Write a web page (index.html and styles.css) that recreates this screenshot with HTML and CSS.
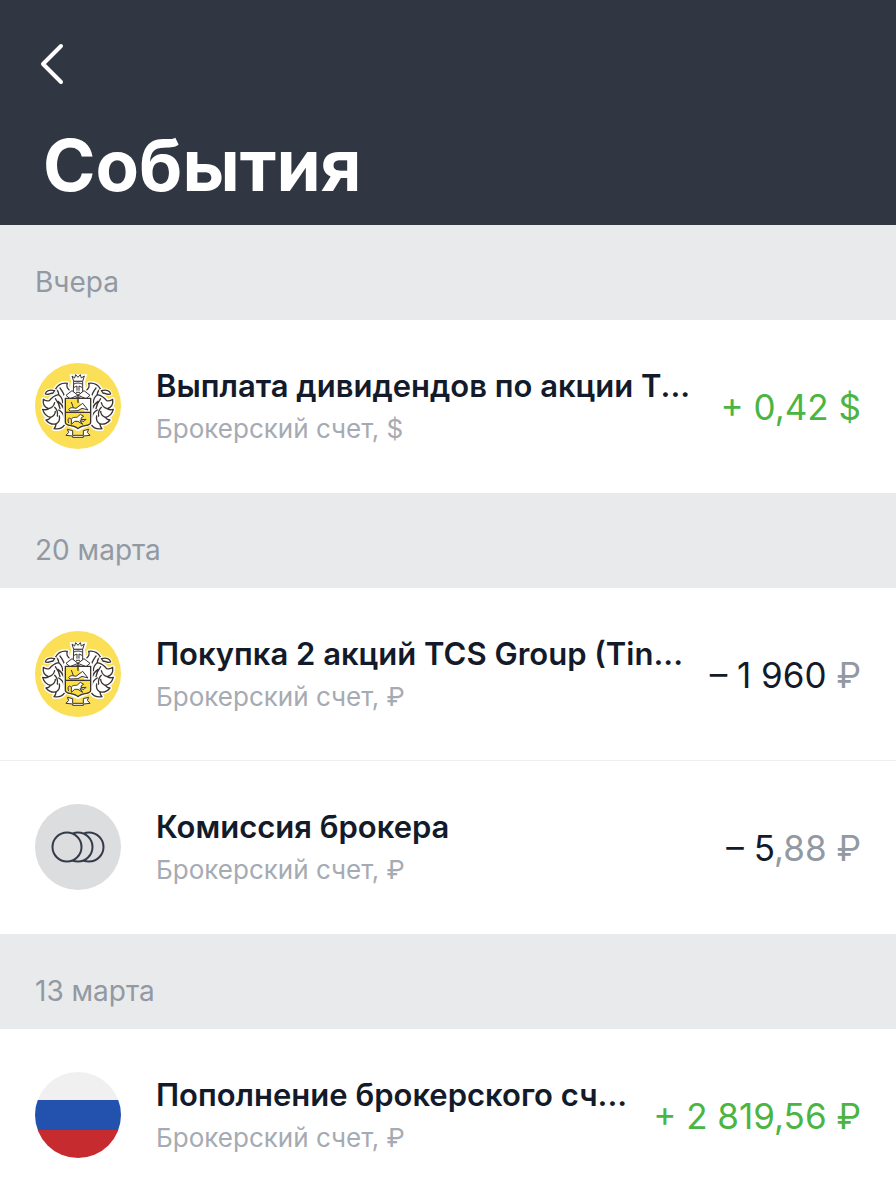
FILE: index.html
```html
<!DOCTYPE html>
<html lang="ru">

<head>
    <meta charset="UTF-8">
    <meta name="viewport" content="width=device-width, initial-scale=1.0">
    <title>События</title>
    <link rel="stylesheet" href="styles.css">
</head>

<body>
    <!-- shared coat of arms, one half is mirrored -->
    <svg class="defs" aria-hidden="true">
        <symbol id="arms" viewBox="15 15 258 258">
            <defs>
                <path id="leaf" d="M122 98 C112 94 108 84 112 76 C98 74 84 80 76 94 C82 96 86 102 86 110 C76 112 64 120 58 128 C50 130 44 128 40 124 C38 138 44 148 56 152 C50 156 44 156 38 154 C42 168 50 176 62 178 C58 184 54 186 48 186 C56 196 66 200 78 198 C78 204 76 208 72 212 C86 214 98 210 104 200 L112 194 V116 Z" />
                <g id="half">
                    <use href="#leaf" fill="#fff" stroke="#fff" stroke-width="13" stroke-linejoin="round" />
                    <use href="#leaf" fill="#fff" stroke="#3b3433" stroke-width="4" stroke-linejoin="round" />
                    <path d="M104 122 C104 108 96 98 90 90 M86 110 C94 116 98 124 98 134 M76 122 C82 130 88 138 90 152 M102 154 C98 142 90 134 84 130 M56 152 C66 150 72 142 74 134 M74 148 C82 156 84 164 82 174 M102 178 C100 168 94 160 86 156 M62 178 C72 174 76 166 76 160 M78 198 C88 192 90 182 88 174" fill="none" stroke="#3b3433" stroke-width="4" stroke-linecap="round" />
                    <path d="M46 108 C48 98 58 94 74 98 L68 106 C60 104 56 112 46 108 Z" fill="#fff" stroke="#fff" stroke-width="10" />
                    <path d="M46 108 C48 98 58 94 74 98 L68 106 C60 104 56 112 46 108 Z" fill="#fff" stroke="#3b3433" stroke-width="4" stroke-linejoin="round" />
                </g>
            </defs>
            <circle cx="144" cy="144" r="129" fill="#fbdf57" />
            <use href="#half" />
            <use href="#half" transform="matrix(-1 0 0 1 288 0)" />
            <path d="M124 53 L128 72 L122 102 L104 116 V196 L144 215 L184 196 V116 L166 102 L160 72 L166 53 Z" fill="#fff" stroke="#fff" stroke-width="9" />
            <g fill="#fff" stroke="#3b3433" stroke-width="3" stroke-linejoin="round">
                <path d="M126 54 L131 70 H158 L163 54 L154 60 L151 50 L144 58 L137 50 L134 60 Z" />
                <path d="M131 70 H158 V102 L144 112 L130 102 Z" />
                <path d="M132 78 C138 74 150 74 156 78 M132 88 L141 84 V98 M156 88 L147 84 V98 M138 103 H150" fill="none" />
                <path d="M126 98 L108 112 L120 122 L144 112 L168 122 L180 112 L162 98 L144 112 Z" />
            </g>
            <path d="M106 121 H182 V193 C182 207 156 199 144 212 C132 199 106 207 106 193 Z" fill="#fbdf45" />
            <path d="M144 123 H180 V161 H164 Z" fill="#fff" />
            <path d="M106 121 H182 V193 C182 207 156 199 144 212 C132 199 106 207 106 193 Z M106 163 H182 M144 112 V134 M137 120 H151" fill="none" stroke="#3b3433" stroke-width="4" stroke-linejoin="round" />
            <g fill="#fff" stroke="#3b3433" stroke-width="3" stroke-linejoin="round">
                <path d="M116 155 C120 147 130 149 138 151 L158 136 L174 156 L156 151 L144 158 L120 159 Z" />
                <path d="M124 132 L130 149" />
                <path d="M124 184 C128 175 136 180 142 177 L151 169 L161 175 L154 179 L153 185 L168 184 L162 190 L150 188 L158 199 L144 190 L134 190 L124 199 Z" />
                <path d="M116 195 C111 182 117 176 124 184" fill="none" />
                <path d="M112 214 L128 218 V232 H160 V218 L176 214 L172 223 L180 232 L160 234 V238 H128 V234 L108 232 L116 223 Z" />
            </g>
        </symbol>
    </svg>

    <header class="header">
        <button class="back" type="button" aria-label="Назад">
            <svg width="26" height="42" viewBox="0 0 26 42" aria-hidden="true">
                <path d="M22 3 L4 21 L22 39" fill="none" stroke="#fff" stroke-width="4" stroke-linecap="round" stroke-linejoin="round" />
            </svg>
        </button>
        <h1>События</h1>
    </header>

    <main>
        <section>
            <h2>Вчера</h2>
            <ul class="events">
                <li class="event">
                    <svg class="icon" aria-hidden="true"><use href="#arms" /></svg>
                    <div class="info">
                        <h3>Выплата дивидендов по акции T...</h3>
                        <p>Брокерский счет, $</p>
                    </div>
                    <div class="amount income">+ 0,42 $</div>
                </li>
            </ul>
        </section>

        <section>
            <h2>20 марта</h2>
            <ul class="events">
                <li class="event">
                    <svg class="icon" aria-hidden="true"><use href="#arms" /></svg>
                    <div class="info">
                        <h3>Покупка 2 акций TCS Group (Tin...</h3>
                        <p>Брокерский счет, ₽</p>
                    </div>
                    <div class="amount">– 1 960 <span class="minor">₽</span></div>
                </li>
                <li class="event">
                    <svg class="icon" viewBox="0 0 86 86" aria-hidden="true">
                        <circle cx="43" cy="43" r="43" fill="#dcdddf" />
                        <g fill="#dcdddf" stroke="#333a4a" stroke-width="2">
                            <circle cx="54" cy="43" r="14.5" />
                            <circle cx="43" cy="43" r="14.5" />
                            <circle cx="32" cy="43" r="14.5" />
                        </g>
                    </svg>
                    <div class="info">
                        <h3>Комиссия брокера</h3>
                        <p>Брокерский счет, ₽</p>
                    </div>
                    <div class="amount">– 5<span class="minor">,88 ₽</span></div>
                </li>
            </ul>
        </section>

        <section>
            <h2>13 марта</h2>
            <ul class="events">
                <li class="event">
                    <svg class="icon flag" viewBox="0 0 86 86" aria-hidden="true">
                        <rect width="86" height="28" fill="#f0f0f0" />
                        <rect y="28" width="86" height="31" fill="#2251ae" />
                        <rect y="58" width="86" height="28" fill="#c62b30" />
                    </svg>
                    <div class="info">
                        <h3>Пополнение брокерского сч...</h3>
                        <p>Брокерский счет, ₽</p>
                    </div>
                    <div class="amount income">+ 2 819,56 ₽</div>
                </li>
            </ul>
        </section>
    </main>
</body>

</html>
```
FILE: styles.css
```css
* {
    box-sizing: border-box;
}

body {
    margin: 0;
    background-color: #fff;
    color: #131b2a;
    font-family: Inter, 'Liberation Sans', sans-serif;
}

h1,
h2,
h3,
p,
ul {
    margin: 0;
    padding: 0;
}

.defs {
    display: block;
    width: 0;
    height: 0;
}

.header {
    padding: 43px 36px 16px 43px;
    background-color: #303642;
    color: #fff;
}

.back {
    display: block;
    margin: 0 0 36px -4px;
    padding: 0;
    border: none;
    background: none;
    cursor: pointer;
}

.back svg {
    display: block;
}

h1 {
    font-size: 71px;
    line-height: 88px;
    font-weight: 700;
}

h2 {
    padding: 40px 36px 21px 35px;
    background-color: #e9eaec;
    color: #9299a2;
    font-size: 28px;
    line-height: 34px;
    font-weight: 400;
}

.events {
    list-style-type: none;
}

.event {
    display: flex;
    align-items: center;
    padding: 43px 35px;
}

.event + .event {
    border-top: 1px solid #eceef0;
}

.event:last-child {
    padding-bottom: 44px;
}

.icon {
    flex: none;
    width: 86px;
    height: 86px;
    margin-right: 35px;
}

.flag {
    border-radius: 50%;
}

.info {
    flex: 1;
    min-width: 0;
    padding-top: 2px;
}

h3 {
    overflow: hidden;
    font-size: 31px;
    line-height: 40px;
    font-weight: 600;
    white-space: nowrap;
    text-overflow: ellipsis;
}

.info p {
    margin-top: 4px;
    color: #a6abb3;
    font-size: 26px;
    line-height: 38px;
}

.amount {
    flex: none;
    margin-left: 20px;
    padding-top: 2px;
    font-size: 35px;
    line-height: 44px;
    white-space: nowrap;
}

.income {
    color: #4bb543;
}

.minor {
    color: #9299a2;
}
```
